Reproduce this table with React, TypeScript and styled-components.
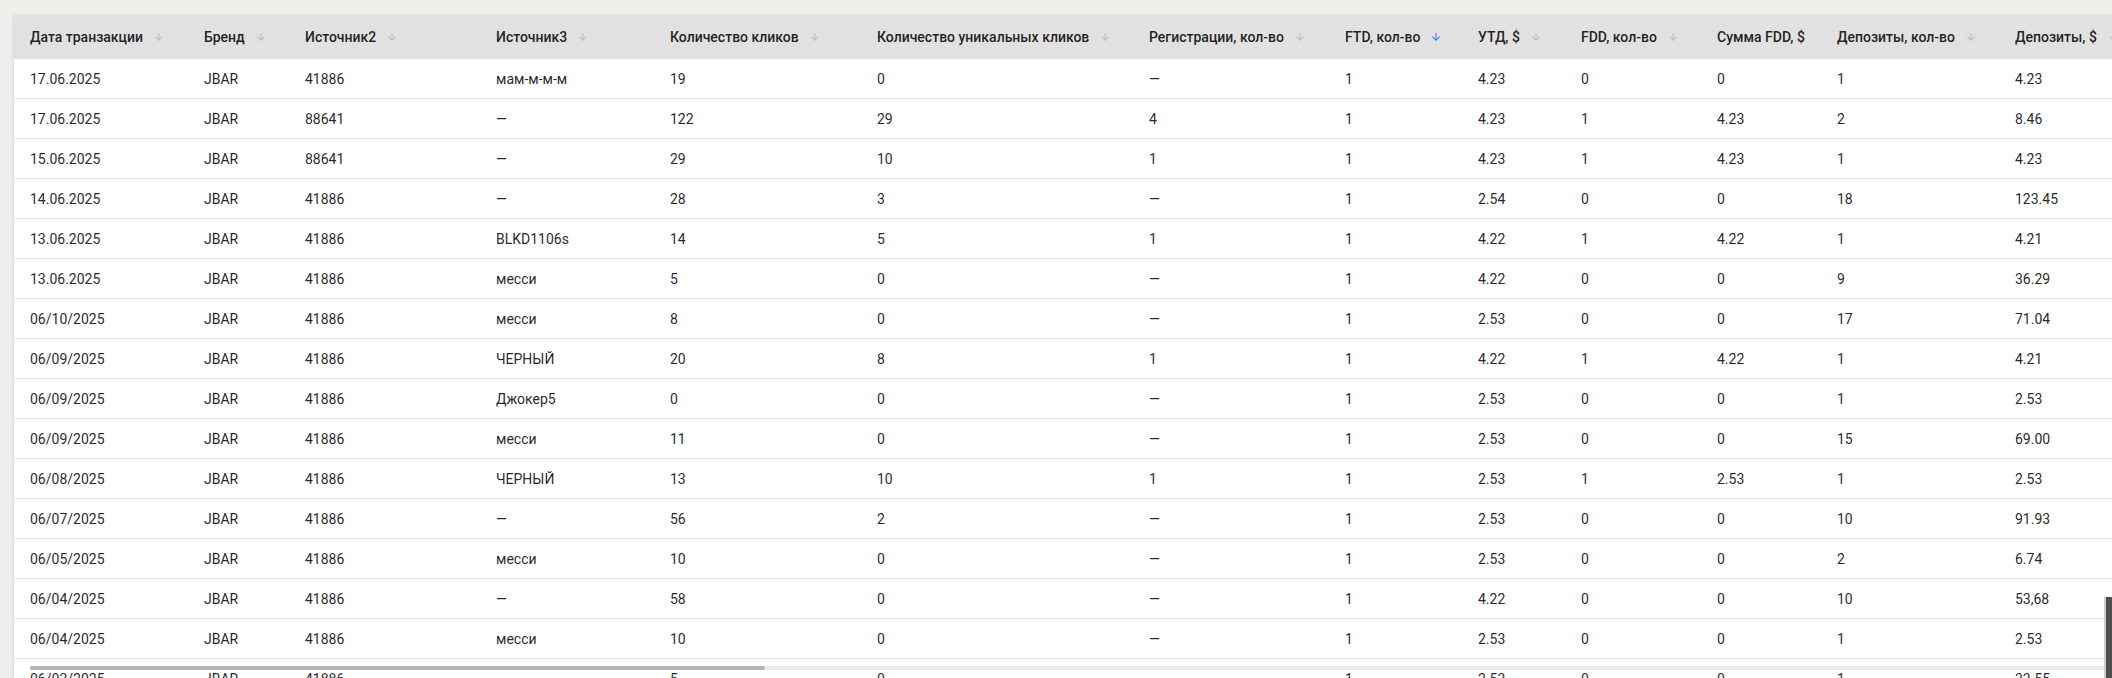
import React from "react";
import styled, { createGlobalStyle } from "styled-components";

const GlobalStyle = createGlobalStyle`
  html, body {
    margin: 0;
    padding: 0;
    background: #efeeeb;
    overflow: hidden;
    width: 2112px;
    height: 678px;
  }
  #root {
    font-family: Roboto, "Noto Sans", Arial, sans-serif;
  }
`;

const Page = styled.div`
  position: relative;
  width: 2112px;
  height: 678px;
  overflow: hidden;
  padding: 15px 0 0 14px;
  box-sizing: border-box;
`;

const Card = styled.div`
  width: 2145px;
  background: #ffffff;
  box-shadow: 0 1px 3px rgba(0, 0, 0, 0.18);
`;

const HeaderRow = styled.div`
  display: flex;
  height: 44px;
  background: #e1e1e1;
`;

const HeadCell = styled.div<{ $w: number }>`
  flex: none;
  width: ${(p) => p.$w}px;
  box-sizing: border-box;
  padding-left: 16px;
  display: flex;
  align-items: center;
  font-size: 14px;
  font-weight: 500;
  color: rgba(0, 0, 0, 0.87);
  white-space: nowrap;
`;

const SortIcon = styled.svg<{ $active?: boolean }>`
  width: 12px;
  height: 12px;
  margin-left: 10px;
  flex: none;
  fill: ${(p) => (p.$active ? "#2f80ed" : "#bdbdbd")};
`;

const Row = styled.div`
  display: flex;
  height: 40px;
  box-sizing: border-box;
  border-bottom: 1px solid #e0e0e0;
`;

const Cell = styled.div<{ $w: number }>`
  flex: none;
  width: ${(p) => p.$w}px;
  box-sizing: border-box;
  padding-left: 16px;
  display: flex;
  align-items: center;
  font-size: 14px;
  font-weight: 400;
  color: rgba(0, 0, 0, 0.87);
  white-space: nowrap;
`;

const HScrollTrack = styled.div`
  position: absolute;
  left: 30px;
  right: 0;
  top: 666px;
  height: 4px;
  background: #ebebeb;
`;

const HScrollThumb = styled.div`
  width: 735px;
  height: 4px;
  border-radius: 2px;
  background: #b4b4b4;
`;

const VScrollThumb = styled.div`
  position: absolute;
  right: 0;
  top: 597px;
  width: 6px;
  height: 90px;
  background: #4f4f4f;
  border-left: 2px solid #cfcfcf;
`;

type Col = { title: string; w: number; sort?: "none" | "idle" | "active" };

const columns: Col[] = [
  { title: "Дата транзакции", w: 174, sort: "idle" },
  { title: "Бренд", w: 101, sort: "idle" },
  { title: "Источник2", w: 191, sort: "idle" },
  { title: "Источник3", w: 174, sort: "idle" },
  { title: "Количество кликов", w: 207, sort: "idle" },
  { title: "Количество уникальных кликов", w: 272, sort: "idle" },
  { title: "Регистрации, кол-во", w: 196, sort: "idle" },
  { title: "FTD, кол-во", w: 133, sort: "active" },
  { title: "УТД, $", w: 103, sort: "idle" },
  { title: "FDD, кол-во", w: 136, sort: "idle" },
  { title: "Сумма FDD, $", w: 120, sort: "none" },
  { title: "Депозиты, кол-во", w: 178, sort: "idle" },
  { title: "Депозиты, $", w: 160, sort: "idle" },
];

const D = "—";

const rows: string[][] = [
  ["17.06.2025", "JBAR", "41886", "мам-м-м-м", "19", "0", D, "1", "4.23", "0", "0", "1", "4.23"],
  ["17.06.2025", "JBAR", "88641", D, "122", "29", "4", "1", "4.23", "1", "4.23", "2", "8.46"],
  ["15.06.2025", "JBAR", "88641", D, "29", "10", "1", "1", "4.23", "1", "4.23", "1", "4.23"],
  ["14.06.2025", "JBAR", "41886", D, "28", "3", D, "1", "2.54", "0", "0", "18", "123.45"],
  ["13.06.2025", "JBAR", "41886", "BLKD1106s", "14", "5", "1", "1", "4.22", "1", "4.22", "1", "4.21"],
  ["13.06.2025", "JBAR", "41886", "месси", "5", "0", D, "1", "4.22", "0", "0", "9", "36.29"],
  ["06/10/2025", "JBAR", "41886", "месси", "8", "0", D, "1", "2.53", "0", "0", "17", "71.04"],
  ["06/09/2025", "JBAR", "41886", "ЧЕРНЫЙ", "20", "8", "1", "1", "4.22", "1", "4.22", "1", "4.21"],
  ["06/09/2025", "JBAR", "41886", "Джокер5", "0", "0", D, "1", "2.53", "0", "0", "1", "2.53"],
  ["06/09/2025", "JBAR", "41886", "месси", "11", "0", D, "1", "2.53", "0", "0", "15", "69.00"],
  ["06/08/2025", "JBAR", "41886", "ЧЕРНЫЙ", "13", "10", "1", "1", "2.53", "1", "2.53", "1", "2.53"],
  ["06/07/2025", "JBAR", "41886", D, "56", "2", D, "1", "2.53", "0", "0", "10", "91.93"],
  ["06/05/2025", "JBAR", "41886", "месси", "10", "0", D, "1", "2.53", "0", "0", "2", "6.74"],
  ["06/04/2025", "JBAR", "41886", D, "58", "0", D, "1", "4.22", "0", "0", "10", "53,68"],
  ["06/04/2025", "JBAR", "41886", "месси", "10", "0", D, "1", "2.53", "0", "0", "1", "2.53"],
  ["06/03/2025", "JBAR", "41886", D, "5", "0", D, "1", "2.53", "0", "0", "1", "33.55"],
];

const ArrowDown: React.FC<{ active?: boolean }> = ({ active }) => (
  <SortIcon $active={active} viewBox="0 0 24 24">
    <path d="M20 12l-1.41-1.41L13 16.17V4h-2v12.17l-5.58-5.59L4 12l8 8 8-8z" />
  </SortIcon>
);

export default function App() {
  return (
    <>
      <GlobalStyle />
      <Page>
        <Card>
          <HeaderRow>
            {columns.map((c) => (
              <HeadCell key={c.title} $w={c.w}>
                {c.title}
                {c.sort !== "none" && <ArrowDown active={c.sort === "active"} />}
              </HeadCell>
            ))}
          </HeaderRow>
          {rows.map((r, i) => (
            <Row key={i}>
              {r.map((v, j) => (
                <Cell key={j} $w={columns[j].w}>
                  {v}
                </Cell>
              ))}
            </Row>
          ))}
        </Card>
        <HScrollTrack>
          <HScrollThumb />
        </HScrollTrack>
        <VScrollThumb />
      </Page>
    </>
  );
}
